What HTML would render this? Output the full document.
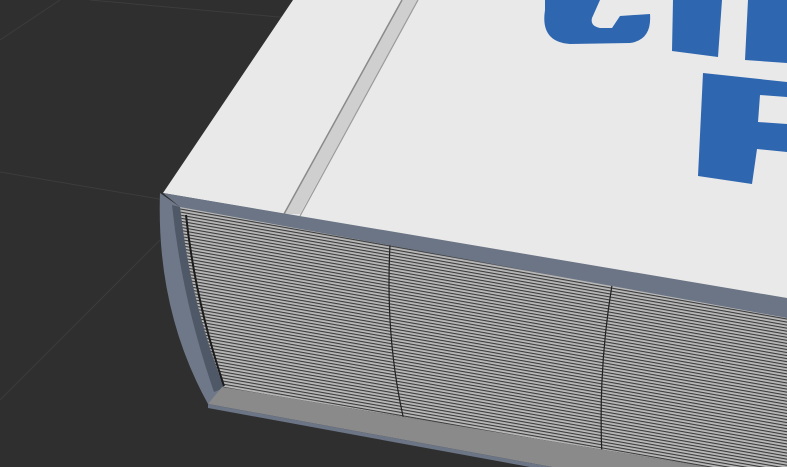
<!DOCTYPE html>
<html><head><style>html,body{margin:0;padding:0;background:#2f2f2f;overflow:hidden;width:787px;height:467px}svg{display:block}</style></head>
<body>
<svg width="787" height="467" viewBox="0 0 787 467" xmlns="http://www.w3.org/2000/svg">
<defs>
<pattern id="pg" width="3" height="3" patternUnits="userSpaceOnUse" patternTransform="rotate(10)">
<rect width="3" height="3" fill="#b8b8b8"/>
<rect width="3" height="1.1" fill="#3a3a3a"/>
</pattern>
</defs>
<rect width="787" height="467" fill="#2f2f2f"/>
<g stroke="#3c3c3c" stroke-width="1">
<line x1="0" y1="172" x2="165" y2="200"/>
<line x1="90" y1="0" x2="290" y2="18"/>
<line x1="0" y1="40" x2="60" y2="0"/>
<line x1="0" y1="400" x2="160" y2="240"/>
</g>
<path d="M178,206 L787,312 L787,467 L708,467 L222,387 Q190,300 178,206 Z" fill="url(#pg)"/>
<path d="M390,245 Q385,340 405,425" stroke="#222" stroke-width="1.2" fill="none"/>
<path d="M612,285 Q598,370 602,458" stroke="#222" stroke-width="1.2" fill="none"/>
<polygon points="293,0 787,0 787,300 163,193" fill="#e9e9e9"/>
<polygon points="402,0 418,0 300,214 284,214" fill="#cfcfcf"/>
<line x1="402" y1="0" x2="284" y2="214" stroke="#8a8a8a" stroke-width="1.5"/>
<line x1="418" y1="0" x2="300" y2="216" stroke="#9a9a9a" stroke-width="1.2"/>
<g fill="#2f66b0">
<path d="M545,0 L600,0 L592,18 Q590,26 600,28 L612,28 L620,16 L650,14 Q652,40 630,43 L570,44 Q540,42 545,10 Z"/>
<polygon points="673,0 722,0 718,57 672,51"/>
<polygon points="748,0 787,0 787,63 745,60"/>
<path d="M703,73 L787,82 L787,97 L760,95 L758,122 L787,124 L787,152 L757,149 L752,184 L698,176 Z"/>
</g>
<polygon points="163,193 787,298 787,318 180,207" fill="#6b7585"/>
<path d="M160,193 Q156,310 208,404 L224,388 Q190,300 180,207 Z" fill="#6e7888"/>
<path d="M180,207 Q190,300 224,388 L214,392 Q182,300 172,205 Z" fill="#4f5866"/>
<path d="M186,215 Q195,300 224,386" stroke="#1c1c1c" stroke-width="2" fill="none"/>
<polygon points="222,387 708,467 552,467 208,404" fill="#8a8a8a"/>
<polygon points="208,404 552,467 530,467 208,408" fill="#6b7585"/>
</svg>
</body></html>
